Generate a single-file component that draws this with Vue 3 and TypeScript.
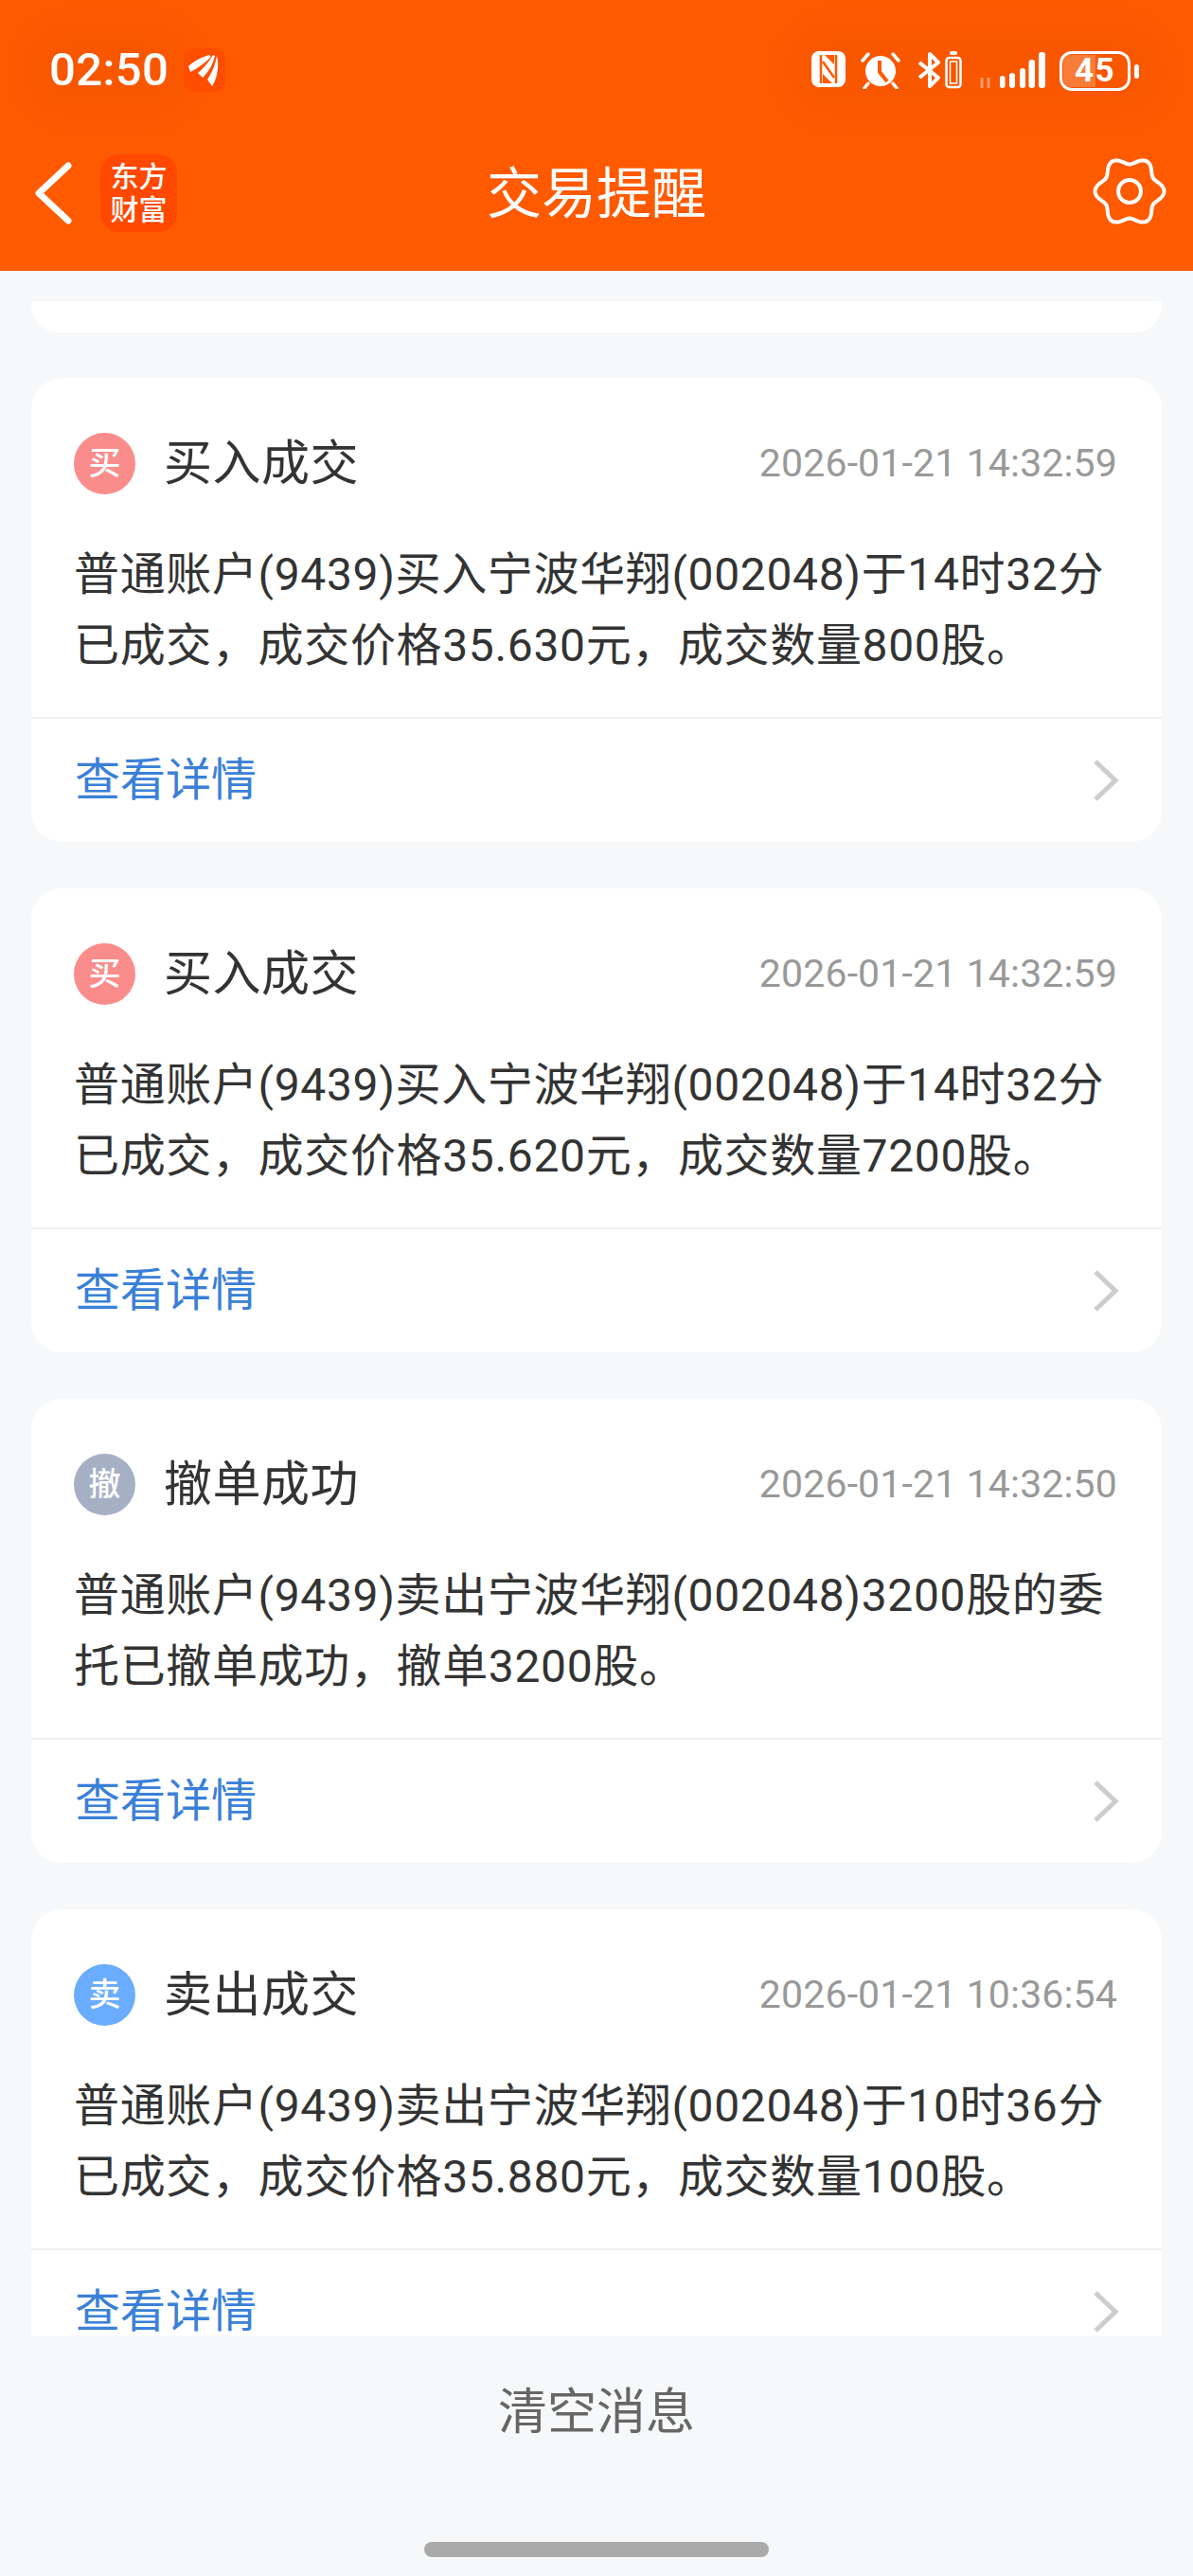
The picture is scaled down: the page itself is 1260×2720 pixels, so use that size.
<script setup lang="ts">
type Msg = {
  badge: string
  tone: string
  title: string
  time: string
  lines: string[]
}

const messages: Msg[] = [
  {
    badge: '买',
    tone: 'buy',
    title: '买入成交',
    time: '2026-01-21 14:32:59',
    lines: ['普通账户(9439)买入宁波华翔(002048)于14时32分', '已成交，成交价格35.630元，成交数量800股。'],
  },
  {
    badge: '买',
    tone: 'buy',
    title: '买入成交',
    time: '2026-01-21 14:32:59',
    lines: ['普通账户(9439)买入宁波华翔(002048)于14时32分', '已成交，成交价格35.620元，成交数量7200股。'],
  },
  {
    badge: '撤',
    tone: 'cancel',
    title: '撤单成功',
    time: '2026-01-21 14:32:50',
    lines: ['普通账户(9439)卖出宁波华翔(002048)3200股的委', '托已撤单成功，撤单3200股。'],
  },
  {
    badge: '卖',
    tone: 'sell',
    title: '卖出成交',
    time: '2026-01-21 10:36:54',
    lines: ['普通账户(9439)卖出宁波华翔(002048)于10时36分', '已成交，成交价格35.880元，成交数量100股。'],
  },
]

// six soft lobes, notch at top and bottom
function gearPath(cx: number, cy: number): string {
  const pts: string[] = []
  for (let i = 0; i < 120; i++) {
    const a = (i / 120) * Math.PI * 2
    const r = 32.5 - 4 * Math.cos(6 * a)
    pts.push(`${(cx + r * Math.sin(a)).toFixed(1)} ${(cy - r * Math.cos(a)).toFixed(1)}`)
  }
  return 'M' + pts.join('L') + 'Z'
}
const gear = gearPath(40, 40)
</script>

<template>
  <div class="screen">
    <header class="top">
      <div class="status">
        <div class="status-left">
          <span class="clock">02:50</span>
          <svg class="app-dot" viewBox="0 0 44 46" width="44" height="46">
            <rect width="44" height="46" rx="11" fill="#ff4d00" />
            <path d="M27 7C20 9 11 13 5 19l2 6C15 21 23 15 29 9Z" fill="#fff" />
            <path d="M31 7C27 14 21 21 15 26l5 5C26 25 31 17 33 8Z" fill="#fff" />
            <path d="M35 8C33 19 29 27 25 33l5 7C35 33 38 19 35 8Z" fill="#fff" />
          </svg>
        </div>
        <div class="status-right">
          <svg viewBox="0 0 36 38" width="36" height="38">
            <rect width="36" height="38" rx="8" fill="#fff" />
            <path d="M10 4v30M26 4v30" stroke="#ff5a00" stroke-width="2.5" />
            <path d="M14 4h10v10ZM12 24l10 10H12Z" fill="#ff5a00" />
            <path d="M12 11l12 17" stroke="#ff5a00" stroke-width="2.5" />
          </svg>
          <svg class="gap-s" viewBox="0 0 44 40" width="44" height="40">
            <circle cx="22" cy="21" r="16" fill="#fff" />
            <path d="M21 10v12l8 10" stroke="#ff5a00" stroke-width="4" fill="none" />
            <path d="M3 10l6-7M41 10l-6-7M9 34l-4 5M35 34l4 5" stroke="#fff" stroke-width="3.5" stroke-linecap="round" />
          </svg>
          <svg class="gap-b" viewBox="0 0 48 40" width="48" height="40">
            <path d="M3 12l20 16-9 9V3l9 9L3 28" fill="none" stroke="#fff" stroke-width="4" stroke-linejoin="round" />
            <rect x="31.5" y="7" width="15" height="31" rx="3" fill="none" stroke="#fff" stroke-width="2.5" />
            <rect x="35.5" y="11" width="7" height="23" fill="none" stroke="#fff" stroke-width="1.5" />
            <rect x="35" y="0" width="8" height="4" rx="2" fill="#fff" />
          </svg>
          <svg class="gap-m" viewBox="0 0 72 40" width="72" height="40">
            <path d="M4 39V28M11 39V28" stroke="#fff" stroke-opacity=".4" stroke-width="3" />
            <rect x="23" y="26" width="5.5" height="13" rx="2.7" fill="#fff" />
            <rect x="33" y="23" width="6" height="16" rx="3" fill="#fff" />
            <rect x="44" y="18" width="6" height="21" rx="3" fill="#fff" />
            <rect x="53.5" y="9" width="6.5" height="30" rx="3" fill="#fff" />
            <rect x="64" y="1" width="7" height="38" rx="3" fill="#fff" />
          </svg>
          <div class="battery">
            <div class="battery-body">
              <span class="battery-fill" />
              <span class="battery-num">45</span>
            </div>
            <span class="battery-nub" />
          </div>
        </div>
      </div>
      <div class="nav">
        <div class="nav-left">
          <svg viewBox="0 0 40 66" width="40" height="66">
            <path d="M35 4L4 33l31 29" fill="none" stroke="#fff" stroke-width="7" stroke-linecap="round" stroke-linejoin="round" />
          </svg>
          <div class="brand"><span>东方</span><span>财富</span></div>
        </div>
        <h1 class="nav-title">交易提醒</h1>
        <svg class="gear" viewBox="0 0 80 80" width="80" height="80">
          <path :d="gear" fill="none" stroke="#fff" stroke-width="4" stroke-linejoin="round" />
          <circle cx="40" cy="40" r="12" fill="none" stroke="#fff" stroke-width="4" />
        </svg>
      </div>
    </header>

    <main class="list">
      <div class="stub" />
      <article v-for="(m, i) in messages" :key="i" class="card">
        <div class="card-head">
          <span class="badge" :class="m.tone">{{ m.badge }}</span>
          <span class="card-title">{{ m.title }}</span>
          <time class="card-time">{{ m.time }}</time>
        </div>
        <p class="card-body">
          <span v-for="l in m.lines" :key="l" class="line">{{ l }}</span>
        </p>
        <div class="card-foot">
          <span class="link">查看详情</span>
          <svg viewBox="0 0 30 46" width="30" height="46">
            <path d="M4 3l21 20L4 43" fill="none" stroke="#cdcdcd" stroke-width="5" />
          </svg>
        </div>
      </article>
    </main>

    <footer class="bottom">
      <div class="clear">清空消息</div>
      <div class="home-bar" />
    </footer>
  </div>
</template>

<style scoped>
.screen {
  width: 1260px;
  height: 2720px;
  display: flex;
  flex-direction: column;
  overflow: hidden;
  background: #f6f8fa;
  font-family: Roboto, "Noto Sans CJK SC", sans-serif;
  color: #333;
}

.top {
  height: 286px;
  flex: none;
  background: #ff5a00;
  color: #fff;
}

.status {
  height: 150px;
  box-sizing: border-box;
  display: flex;
  justify-content: space-between;
  align-items: flex-start;
  padding: 51px 57px 0 52px;
}

.status-left {
  display: flex;
  align-items: center;
  gap: 16px;
}

.clock {
  font-size: 49px;
  line-height: 46px;
  letter-spacing: 0.4px;
  font-weight: 500;
  background: rgba(160, 60, 0, 0.07);
  box-shadow: 0 0 30px 24px rgba(160, 60, 0, 0.07);
  border-radius: 20px;
}

.status-right {
  display: flex;
  align-items: flex-start;
  padding-top: 3px;
  background: rgba(160, 60, 0, 0.07);
  box-shadow: 0 0 30px 24px rgba(160, 60, 0, 0.07);
  border-radius: 20px;
}

.gap-s {
  margin-left: 15px;
}

.gap-b {
  margin-left: 16px;
}

.gap-m {
  margin-left: 17px;
  margin-right: 14px;
}

.battery {
  display: flex;
  align-items: center;
  gap: 4px;
}

.battery-body {
  position: relative;
  width: 75px;
  height: 42px;
  box-sizing: border-box;
  border: 3px solid #fff;
  border-radius: 13px;
  display: flex;
  align-items: center;
  justify-content: center;
  overflow: hidden;
}

.battery-fill {
  position: absolute;
  left: 1px;
  top: 1px;
  bottom: 1px;
  width: 34px;
  border-radius: 8px 0 0 8px;
  background: rgba(255, 255, 255, 0.22);
}

.battery-num {
  position: relative;
  font-size: 35px;
  font-weight: 700;
  line-height: 36px;
  letter-spacing: 1.5px;
}

.battery-nub {
  width: 5px;
  height: 15px;
  border-radius: 3px;
  background: #fff;
}

.nav {
  height: 136px;
  box-sizing: border-box;
  position: relative;
  display: flex;
  align-items: flex-start;
  justify-content: space-between;
  padding: 13px 27px 0 37px;
}

.nav-left {
  display: flex;
  align-items: center;
  gap: 29px;
}

.brand {
  width: 81px;
  height: 82px;
  border-radius: 20px;
  background: #ff4800;
  display: flex;
  flex-direction: column;
  align-items: center;
  justify-content: center;
  font-size: 30px;
  line-height: 35px;
  font-weight: 500;
}

.nav-title {
  position: absolute;
  left: 0;
  right: 0;
  top: 17px;
  margin: 0;
  text-align: center;
  font-size: 58px;
  line-height: 76px;
  font-weight: 400;
}

.gear {
  margin-top: -1px;
}

.list {
  height: 2181px;
  flex: none;
  overflow: hidden;
  padding: 32px 33px 0;
  box-sizing: border-box;
}

.stub {
  height: 33px;
  margin-bottom: 48px;
  background: #fff;
  border-radius: 0 0 28px 28px;
}

.card {
  height: 490px;
  margin-bottom: 49px;
  background: #fff;
  border-radius: 32px;
  display: flex;
  flex-direction: column;
}

.card-head {
  height: 65px;
  padding: 58px 47px 0 45px;
  display: flex;
  align-items: center;
}

.badge {
  width: 65px;
  height: 65px;
  flex: none;
  border-radius: 50%;
  color: #fff;
  font-size: 34px;
  line-height: 65px;
  font-weight: 500;
  text-align: center;
  opacity: 0.95;
}

.buy {
  background: #fb8686;
}

.cancel {
  background: #a2acc2;
}

.sell {
  background: #63a8ff;
}

.card-title {
  margin-left: 30px;
  font-size: 51px;
  line-height: 65px;
  letter-spacing: 0.5px;
  color: #333;
}

.card-time {
  margin-left: auto;
  font-size: 41px;
  line-height: 65px;
  letter-spacing: 0.15px;
  color: #999;
}

.card-body {
  margin: 0;
  padding: 47px 40px 0 45px;
  font-size: 48px;
  line-height: 75px;
  letter-spacing: 0.65px;
  color: #333;
  height: 189px;
}

.line {
  display: block;
  white-space: nowrap;
}

.card-foot {
  height: 130px;
  border-top: 2px solid #f0f0f0;
  display: flex;
  align-items: center;
  justify-content: space-between;
  padding: 0 44px 0 46px;
}

.link {
  font-size: 48px;
  line-height: 64px;
  color: #3a80d8;
}

.bottom {
  flex: 1;
  display: flex;
  flex-direction: column;
  align-items: center;
}

.clear {
  margin-top: 47px;
  font-size: 52px;
  line-height: 68px;
  color: #666;
}

.home-bar {
  width: 364px;
  height: 16px;
  margin-top: 102px;
  border-radius: 8px;
  background: #aaa;
}
</style>
